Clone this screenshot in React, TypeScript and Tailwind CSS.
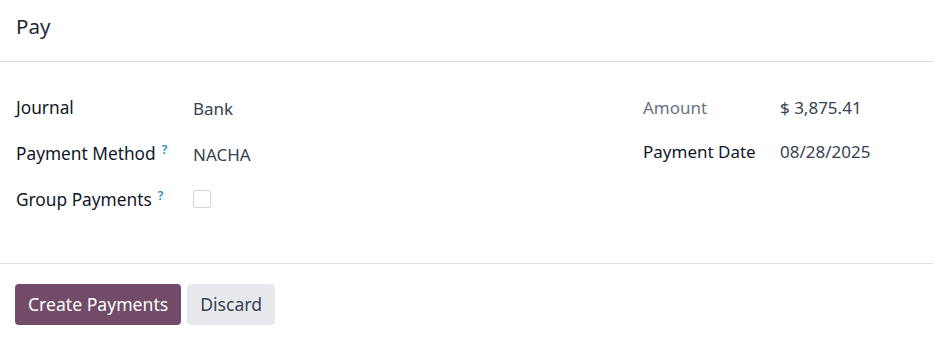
import React from "react";

const font = { fontFamily: '"Noto Sans", "Open Sans", sans-serif' };

function Help() {
  return <sup className="ml-[6px] text-[12px] font-semibold text-[#1a8fbf] relative top-[-6px]">?</sup>;
}

export default function App() {
  return (
    <div className="w-[933px] h-[337px] bg-white text-[#111827]" style={font}>
      <div className="h-[62px] border-b border-[#dcdde0] px-4 flex items-center">
        <span className="text-[20.5px] text-[#1f2937] -mt-[9px]">Pay</span>
      </div>
      <div className="h-[202px] border-b border-[#dee2e6] px-4 pt-[33px] flex">
        <div className="w-[627px] flex flex-col">
          <div className="h-[46px] flex items-start">
            <div className="w-[177px] text-[17.3px] text-[#111827]">Journal</div>
            <div className="text-[17px] text-[#374151] mt-[1px]">Bank</div>
          </div>
          <div className="h-[46px] flex items-start">
            <div className="w-[177px] text-[17.3px] text-[#111827]">Payment Method<Help /></div>
            <div className="text-[17px] text-[#374151] mt-[1px]">NACHA</div>
          </div>
          <div className="h-[46px] flex items-start">
            <div className="w-[177px] text-[17.3px] text-[#111827]">Group Payments<Help /></div>
            <div className="w-[18px] h-[18px] border border-[#d1d5db] rounded-[2px] mt-[3px]" />
          </div>
        </div>
        <div className="flex flex-col">
          <div className="h-[46px] flex items-start">
            <div className="w-[137px] text-[17px] text-[#6b7280]">Amount</div>
            <div className="text-[17px] text-[#374151]">$ 3,875.41</div>
          </div>
          <div className="h-[46px] flex items-start -mt-[2px]">
            <div className="w-[137px] text-[17px] text-[#111827]">Payment Date</div>
            <div className="text-[17px] text-[#374151]">08/28/2025</div>
          </div>
        </div>
      </div>
      <div className="px-[15px] pt-[20px] flex gap-[6px]">
        <button className="h-[41px] px-[13px] rounded-[4px] bg-[#714b67] text-white text-[17.6px]">Create Payments</button>
        <button className="h-[41px] px-[13px] rounded-[4px] bg-[#e7e9ed] text-[#374151] text-[17.6px]">Discard</button>
      </div>
    </div>
  );
}
